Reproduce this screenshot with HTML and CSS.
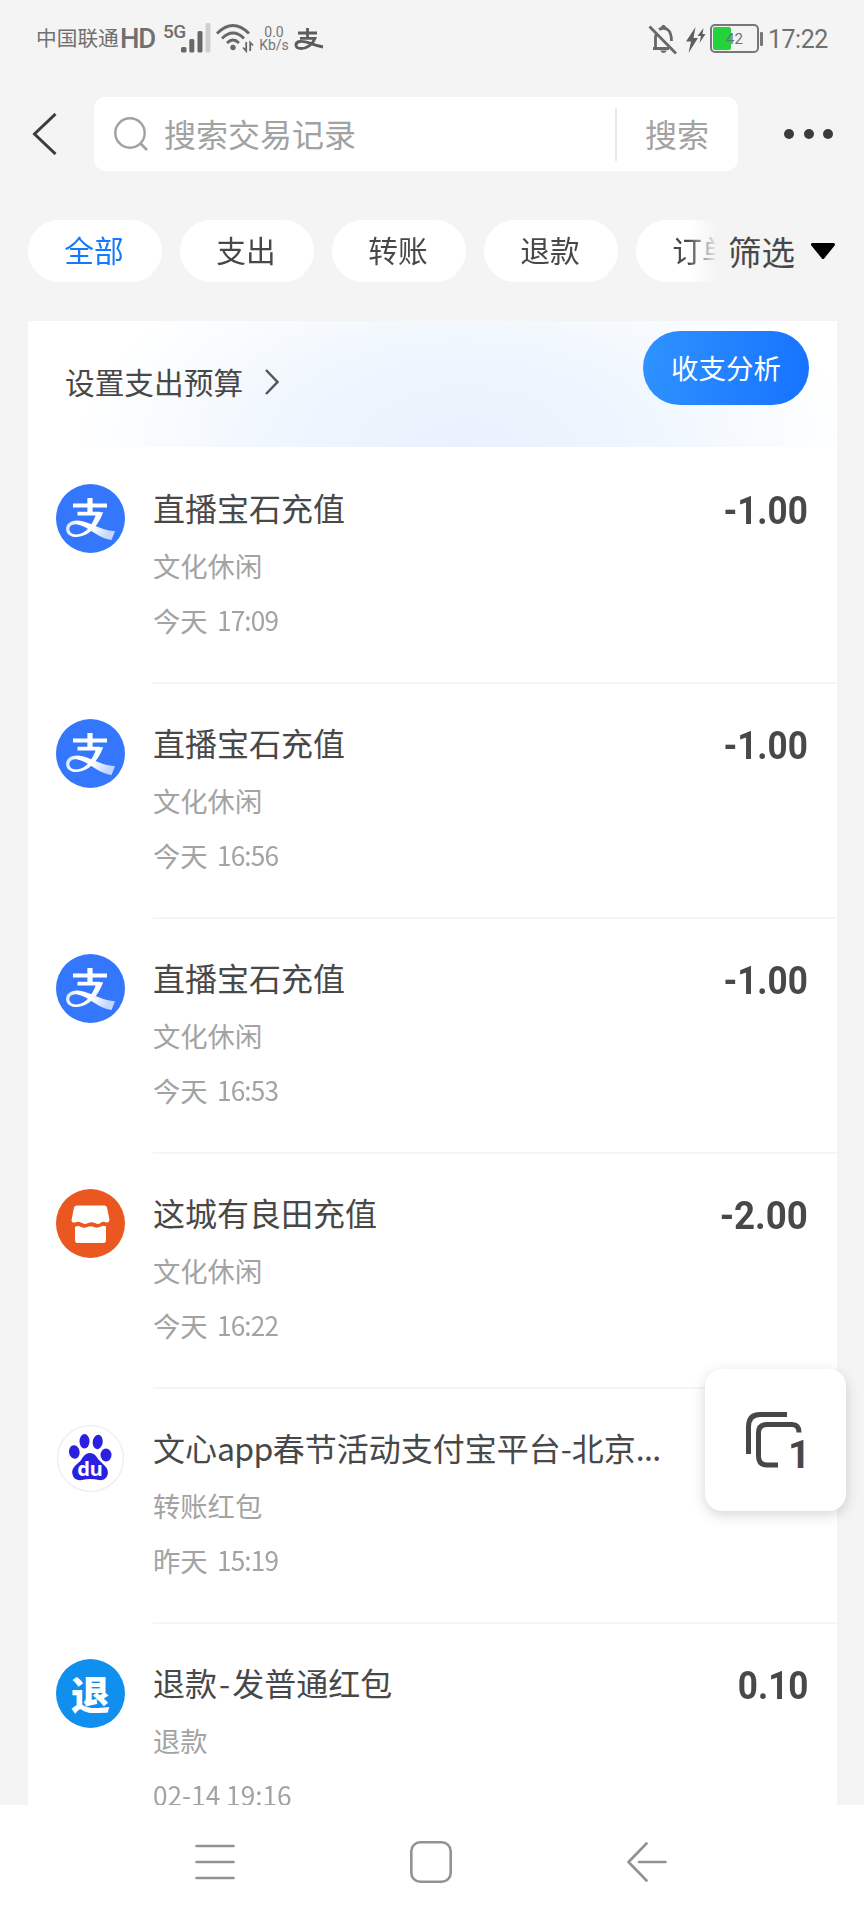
FILE: index.html
```html
<!DOCTYPE html>
<html lang="zh-CN">
<head>
<meta charset="utf-8">
<title>账单</title>
<link rel="stylesheet" href="styles.css">
</head>
<body>
<svg class="defs" width="0" height="0" aria-hidden="true">
  <defs>
    <linearGradient id="swoosh" x1="0" y1="0" x2="1" y2="0.3">
      <stop offset="0" stop-color="#fff" stop-opacity=".65"/>
      <stop offset=".35" stop-color="#fff"/>
      <stop offset=".65" stop-color="#fff"/>
      <stop offset="1" stop-color="#fff" stop-opacity=".7"/>
    </linearGradient>
    <symbol id="alipay" viewBox="0 0 69 69">
      <circle cx="34.5" cy="34.5" r="34.5" fill="#3477fd"/>
      <path d="M17 21.5H51M21.5 29.7H44" stroke="#fff" stroke-width="3.8" fill="none"/>
      <path d="M34 14V30" stroke="#fff" stroke-width="5.2" fill="none"/>
      <path d="M47.2 28.2C44 37 38 46.500 30 50.500C22 54.700 12.500 53.500 10.500 47.500C8.500 40.500 14.500 36 22 36.500C34 37.500 43 46 59 47.200L55.500 56C42 54.500 33 42.500 21.500 40.500C16 39.600 12.600 42.800 13.500 46.500C15 51.500 23 51.300 28 48C34 44 38.500 36.500 40.500 28.200Z" fill="url(#swoosh)"/>
    </symbol>
  </defs>
</svg>
<div class="screen">
  <header class="status">
    <div class="status-left">
      <span class="carrier">中国联通</span><span class="hd">HD</span><span class="five-g">5G</span>
      <svg class="signal" width="30" height="32" viewBox="0 0 30 32"><rect x="0" y="25" width="5.500" height="5.500" rx="1.500" fill="#686868"/><rect x="8.300" y="17" width="5" height="13.500" rx="1.500" fill="#686868"/><rect x="16.500" y="9" width="5" height="21.500" rx="1.500" fill="#686868"/><rect x="24.500" y="1" width="5" height="29.500" rx="1.500" fill="#cfcfcf"/></svg>
      <svg class="wifi" width="39" height="30" viewBox="0 0 39 30"><g fill="none" stroke="#686868" stroke-width="2.800"><path d="M1 10.500Q17 -5.500 33 10.500M6 15.500Q17 4.500 28 15.500M11 20Q17 14 23 20"/></g><circle cx="17" cy="24.500" r="2.700" fill="#686868"/><path d="M30.200 19V28L27 24.500M34.200 28V19.500L37 22.500" fill="none" stroke="#686868" stroke-width="1.800"/></svg>
      <span class="speed"><span>0.0</span><span>Kb/s</span></span>
      <svg class="zhi" width="30" height="24" viewBox="0 0 30 24"><path d="M4 5H23M13.500 0V10M6 10.300H21C19 16 13 20.500 7 20.500C1 20.500 0 14.500 6 13.500C12 12.500 18 17 29 19" fill="none" stroke="#5c5c5c" stroke-width="2.800"/></svg>
    </div>
    <div class="status-right">
      <svg class="bell" width="30" height="31" viewBox="0 0 30 31"><g fill="none" stroke="#686868" stroke-width="2.800"><path d="M5 24.500H21M7.500 24V13Q8 10 9 9M11 5.500Q15.500 3 19.500 5.500Q23.500 8.500 23.500 17M1.500 2.500L28 29.500"/></g><path d="M12.500 3.500Q15.500 -2 18.500 3.500ZM12 26.500H19Q15.500 31.500 12 26.500Z" fill="#686868"/></svg>
      <svg class="bolt" width="22" height="26" viewBox="0 0 22 26"><path d="M10.500 0L1 14.500H6L3.500 26L13 11H8.500ZM18.500 1L12.500 9H16L14.500 16L20.500 7H17.500Z" fill="#5f5f5f"/></svg>
      <span class="battery"><i class="charge"></i><b>42</b></span><i class="battery-tip"></i>
      <time class="clock">17:22</time>
    </div>
  </header>

  <div class="search-row">
    <svg class="back" width="26" height="42" viewBox="0 0 26 42"><path d="M23.500 1L2.500 21L23.500 41" fill="none" stroke="#3c3c3c" stroke-width="3"/></svg>
    <div class="search">
      <svg width="36" height="36" viewBox="0 0 36 36"><circle cx="17" cy="17" r="14.700" fill="none" stroke="#a1a1a1" stroke-width="2.400"/><path d="M27.500 27.500L34 34" stroke="#a1a1a1" stroke-width="2.600"/></svg>
      <span class="placeholder">搜索交易记录</span>
      <span class="search-button"><span>搜索</span></span>
    </div>
    <div class="more"><i></i><i></i><i></i></div>
  </div>

  <nav class="filters">
    <div class="chips"><span class="chip active">全部</span><span class="chip">支出</span><span class="chip">转账</span><span class="chip">退款</span><span class="chip">订单</span></div>
    <div class="select">筛选<svg width="26" height="18" viewBox="0 0 26 18"><path d="M2.500 2.500H23.500L13 15.500Z" fill="#000" stroke="#000" stroke-width="3" stroke-linejoin="round"/></svg></div>
  </nav>

  <main class="bills">
    <section class="budget">
      <span class="budget-link">设置支出预算<svg width="16" height="26" viewBox="0 0 16 26"><path d="M2 1L13.500 13L2 25" fill="none" stroke="#555" stroke-width="2.500"/></svg></span>
      <span class="analysis"><span>收支分析</span></span>
    </section>

    <article class="bill">
      <svg class="avatar"><use href="#alipay"/></svg>
      <div class="detail"><div class="line"><h2>直播宝石充值</h2><strong>-1.00</strong></div><p>文化休闲</p><p class="when">今天 <span>17:09</span></p></div>
    </article>
    <article class="bill">
      <svg class="avatar"><use href="#alipay"/></svg>
      <div class="detail"><div class="line"><h2>直播宝石充值</h2><strong>-1.00</strong></div><p>文化休闲</p><p class="when">今天 <span>16:56</span></p></div>
    </article>
    <article class="bill">
      <svg class="avatar"><use href="#alipay"/></svg>
      <div class="detail"><div class="line"><h2>直播宝石充值</h2><strong>-1.00</strong></div><p>文化休闲</p><p class="when">今天 <span>16:53</span></p></div>
    </article>
    <article class="bill">
      <svg class="avatar" viewBox="0 0 69 69"><circle cx="34.500" cy="34.500" r="34.500" fill="#eb5720"/><path d="M21.500 16.500H48.500Q50.500 16.500 51 18.500L53.500 31Q53 34 50 33.500Q47 32 44.500 34Q41.500 36 38.500 33.800Q35 32.500 32 34Q28.500 36 25.500 33.800Q22 32 19.500 33.500Q15.500 34 15.500 31L18 18.500Q18.500 16.500 21.500 16.500ZM19 38Q22 36 25 38Q28.500 39.500 32 37.800Q35 36.500 38 38Q41.500 39.500 45 37.500Q47 36 50 37.500V51Q50 54 47.500 54H21.500Q19 54 19 51Z" fill="#fff"/></svg>
      <div class="detail"><div class="line"><h2>这城有良田充值</h2><strong class="wide">-2.00</strong></div><p>文化休闲</p><p class="when">今天 <span>16:22</span></p></div>
    </article>
    <article class="bill">
      <svg class="avatar" viewBox="0 0 69 69"><circle cx="34.500" cy="34.500" r="33" fill="#fff" stroke="#efeff4" stroke-width="1.500"/><g fill="#2b20df"><ellipse cx="18.300" cy="28" rx="5.300" ry="6.800" transform="rotate(-8 18 28)"/><ellipse cx="28.500" cy="17.300" rx="5" ry="7.300"/><ellipse cx="41.700" cy="18" rx="5" ry="7.200" transform="rotate(8 42 18)"/><ellipse cx="50" cy="31" rx="5.500" ry="6.500"/><path d="M34 29Q39 29 42 35Q45 38 49 42Q53 46 51.500 51Q49.500 57 43 56Q34 54 26 56Q18 57 16.500 50.500Q15 44.500 21 40Q25 37 27 33Q30 29 34 29Z"/></g><text x="34" y="52" class="du">du</text></svg>
      <div class="detail"><div class="line"><h2>文心<span class="latin">app</span>春节活动支付宝平台-北京<span class="latin">...</span></h2></div><p>转账红包</p><p class="when">昨天 <span>15:19</span></p></div>
    </article>
    <article class="bill">
      <div class="avatar refund"><span>退</span></div>
      <div class="detail"><div class="line"><h2>退款<span class="dash">-</span>发普通红包</h2><strong>0.10</strong></div><p>退款</p><p class="when"><span class="date">02-14 19:16</span></p></div>
    </article>
  </main>

  <footer class="navbar">
    <svg width="40" height="42" viewBox="0 0 40 42"><path d="M1.500 5H38.500M1.500 21H38.500M1.500 37H38.500"/></svg>
    <svg width="42" height="42" viewBox="0 0 42 42"><rect x="1.300" y="1.300" width="39.400" height="39.400" rx="9"/></svg>
    <svg width="40" height="42" viewBox="0 0 40 42"><path d="M19.500 2.500L1.500 21L19.500 39.500M12 21H38.500"/></svg>
  </footer>

  <aside class="float">
    <svg width="60" height="60" viewBox="0 0 60 60"><path d="M3.500 44V17Q3.500 4.500 15 4.500H42M33 55H22Q13.500 55 13.500 46V23Q13.500 14.500 22 14.500H47Q54 14.500 54 22.500" fill="none" stroke="#474747" stroke-width="5"/></svg>
    <b>1</b>
  </aside>
</div>
</body>
</html>
```
FILE: styles.css
```css
* { box-sizing: border-box; }
body { margin: 0; font-family: "Noto Sans CJK SC", sans-serif; color: #484848; }
h2, p { margin: 0; font-weight: 400; }
i, b { font-style: normal; font-weight: 400; }
svg { display: block; flex: none; }
.defs { position: absolute; }
.screen { position: relative; display: flex; flex-direction: column; width: 864px; height: 1920px; overflow: hidden; background: #f4f4f4; white-space: nowrap; }

/* status bar */
.status { display: flex; justify-content: space-between; height: 97px; padding: 0 37px 0 36px; flex: none; color: #707070; font-family: Roboto, "Noto Sans CJK SC", sans-serif; }
.status-left, .status-right { display: flex; align-items: flex-start; }
.carrier { width: 84px; font-size: 20.700px; line-height: 30px; margin-top: 24px; }
.hd { width: 43px; font-size: 27.500px; font-weight: 500; line-height: 30px; margin-top: 24px; letter-spacing: -1.200px; }
.five-g { width: 18px; font-size: 19px; font-weight: 500; line-height: 20px; margin-top: 22px; letter-spacing: -.500px; }
.signal { margin-top: 22px; }
.wifi { margin: 23px 0 0 5px; }
.speed { display: flex; flex-direction: column; align-items: center; width: 30px; margin: 26px 0 0 4px; font-size: 14px; line-height: 13px; color: #777; }
.zhi { margin: 28px 0 0 5px; }
.bell { margin: 24px 7px 0 0; }
.bolt { margin: 27px 3px 0 0; }
.battery { position: relative; display: flex; align-items: center; justify-content: center; width: 49px; height: 29px; margin-top: 24px; border: 2px solid #777; border-radius: 5px; font-size: 15px; }
.battery b { position: relative; }
.charge { position: absolute; left: 1px; top: 1px; width: 18px; height: 23px; border-radius: 2px; background: #22d33c; }
.battery-tip { width: 3px; height: 14px; margin: 32px 5px 0 1px; border-radius: 1px; background: #777; }
.clock { width: 59px; margin-top: 25px; font-size: 25px; line-height: 30px; letter-spacing: -.500px; }

/* search */
.search-row { display: flex; align-items: center; height: 74px; padding-left: 32px; flex: none; }
.search { display: flex; align-items: center; width: 644px; height: 74px; margin-left: 36px; padding-left: 19px; border-radius: 12px; background: #fff; font-size: 32px; color: #a2a2a2; }
.placeholder { margin-left: 15px; width: 451px; padding-bottom: 2px; line-height: 46px; }
.search-button { display: flex; align-items: center; height: 53px; padding-left: 28px; padding-bottom: 2px; border-left: 2px solid #e6e6e6; }
.more { display: flex; gap: 9.500px; margin-left: 46px; }
.more i { width: 10px; height: 10px; border-radius: 50%; background: #3b3b3b; }

/* filters */
.filters { display: flex; align-items: center; height: 150px; padding: 9px 0 0 28px; flex: none; }
.chips { display: flex; gap: 18px; width: 687px; overflow: hidden; -webkit-mask-image: linear-gradient(to right, #000 660px, transparent 690px); mask-image: linear-gradient(to right, #000 660px, transparent 690px); }
.chip { display: flex; align-items: center; justify-content: center; flex: none; width: 134px; height: 62px; padding: 0 2px 2px 0; border-radius: 31px; background: #fff; font-size: 29.700px; }
.active { color: #1677ff; }
.select { display: flex; align-items: center; gap: 15px; margin-left: 13px; font-size: 33.500px; line-height: 48px; }

/* bill list */
.bills { flex: 1; width: 809px; min-height: 0; margin-left: 28px; overflow: hidden; background: #fff; }
.budget { display: flex; justify-content: space-between; height: 126px; margin-bottom: 2px; padding: 10px 28px 0 37px; background: radial-gradient(ellipse 390px 210px at 54% 100%, #e9f2fd 0%, #edf5fe 40%, #fff 100%); }
.budget-link { display: flex; align-items: center; gap: 21px; height: 101px; font-size: 29.700px; }
.analysis { display: flex; align-items: center; justify-content: center; width: 166px; height: 74px; padding-bottom: 2px; border-radius: 37px; background: linear-gradient(100deg, #2f93ff, #1672ff); color: #fff; font-size: 27.500px; }
.bill { display: flex; height: 235px; padding-left: 28px; }
.avatar { flex: none; width: 69px; height: 69px; margin-top: 35px; }
.refund { display: flex; align-items: center; justify-content: center; padding-bottom: 3px; border-radius: 50%; background: #118fef; color: #fff; font-size: 39px; font-weight: 900; line-height: 1; }
.du { font: bold 20px "Noto Sans", sans-serif; fill: #fff; text-anchor: middle; }
.detail { flex: 1; margin-left: 28px; padding-top: 35px; border-bottom: 2px solid #f5f5f5; }
.bill:last-child .detail { border: 0; }
.line { display: flex; justify-content: space-between; height: 46px; padding-right: 29px; }
.line h2 { font-size: 32px; line-height: 46px; }
.latin { letter-spacing: -.700px; }
.dash { margin: 0 2px; }
.line strong { margin-top: 3px; font: 700 39px/48px Roboto, sans-serif; color: #484848; transform: scaleX(.9); transform-origin: right; }
.line .wide { transform: scaleX(.94); }
.detail p { margin-top: 15px; font-size: 27.300px; line-height: 40px; color: #a3a3a3; }
.detail .when { display: flex; align-items: center; gap: 9px; }
.when span { font-size: 27px; letter-spacing: -.900px; transform: scaleX(.97); transform-origin: left; }
.when .date { letter-spacing: 0; }

/* system navigation */
.navbar { display: flex; align-items: center; justify-content: space-between; height: 115px; padding: 0 197px 2px 195px; flex: none; background: #fff; }
.navbar svg { fill: none; stroke: #929292; stroke-width: 2.600; stroke-linecap: round; stroke-linejoin: round; }

.float { position: absolute; left: 705px; top: 1369px; width: 141px; height: 142px; padding: 41px 0 0 40px; border-radius: 17px; background: #fff; box-shadow: 0 4px 14px rgba(0, 0, 0, .16); }
.float b { position: absolute; left: 83px; top: 64px; font: 700 39px/44px Roboto, sans-serif; color: #474747; }
```
